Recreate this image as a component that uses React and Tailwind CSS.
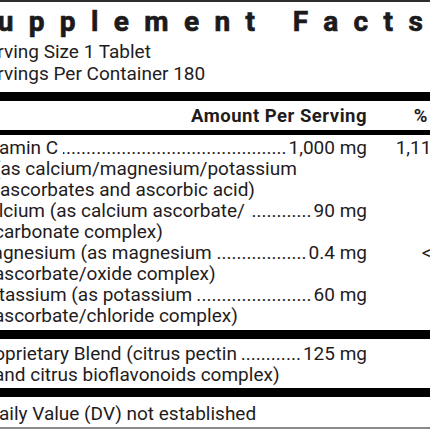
import React from "react";

const DOTS = ".".repeat(120);

function Row({ first, amount, dv, rest = [] }) {
  return (
    <div>
      <div className="flex">
        <div className="flex w-[391px] min-w-0">
          <span className="whitespace-nowrap">{first}&nbsp;</span>
          <span className="flex min-w-0 flex-1 justify-end overflow-hidden whitespace-nowrap">
            <span>{DOTS}</span>
          </span>
          <span className="whitespace-nowrap pl-[2px]">{amount}</span>
        </div>
        <div className="flex-1 whitespace-nowrap pr-[6px] text-right">{dv}</div>
      </div>
      {rest.map((r, i) => (
        <div key={i} className={`whitespace-nowrap ${r.hang ? "pl-[24px]" : "pl-[18px]"}`}>
          {r.t}
        </div>
      ))}
    </div>
  );
}

export default function App() {
  return (
    <div className="h-[430px] w-[430px] overflow-hidden bg-white font-[Roboto,'Liberation_Sans',sans-serif] text-[#1f1c1d]">
      <div className="h-[2px] w-full bg-[#2e2e2e]" />
      <div className="ml-[-24px] w-[486px]">
        <div className="ml-[-11px] whitespace-nowrap pt-[6px] text-[28px] font-bold leading-[28px] tracking-[15.4px] text-[#1c1a1b] [-webkit-text-stroke:0.7px_#1c1a1b]">
          Supplement Facts
        </div>
        <div className="mt-[5px] text-[19px] leading-[22px]">
          <div className="whitespace-nowrap">Serving Size 1 Tablet</div>
          <div className="whitespace-nowrap">Servings Per Container 180</div>
        </div>
        <div className="mt-[7px] h-[9px] bg-black" />
        <div className="flex pt-[5px] text-[18.5px] font-bold leading-[21px]">
          <div className="w-[391px] whitespace-nowrap text-right tracking-[0.5px]">Amount Per Serving</div>
          <div className="flex-1 whitespace-nowrap pr-[6px] text-right">% DV</div>
        </div>
        <div className="mt-[3px] h-[5px] bg-black" />
        <div className="pt-[2px] text-[19px] leading-[21px]">
          <Row
            first="Vitamin C"
            amount="1,000 mg"
            dv="1,111%"
            rest={[
              { t: "(as calcium/magnesium/potassium" },
              { t: "ascorbates and ascorbic acid)", hang: true },
            ]}
          />
          <Row
            first="Calcium (as calcium ascorbate/"
            amount="90 mg"
            dv="7%"
            rest={[{ t: "carbonate complex)" }]}
          />
          <Row
            first="Magnesium (as magnesium"
            amount="0.4 mg"
            dv="<1%"
            rest={[{ t: "ascorbate/oxide complex)" }]}
          />
          <Row
            first="Potassium (as potassium"
            amount="60 mg"
            dv="1%"
            rest={[{ t: "ascorbate/chloride complex)" }]}
          />
        </div>
        <div className="mt-[4px] h-[9px] bg-black" />
        <div className="pt-[4px] text-[19px] leading-[21px]">
          <Row
            first="Proprietary Blend (citrus pectin"
            amount="125 mg"
            dv="†"
            rest={[{ t: "and citrus bioflavonoids complex)" }]}
          />
        </div>
        <div className="mt-[3px] h-[9px] bg-black" />
        <div className="whitespace-nowrap pt-[6px] text-[19px] leading-[21px]">
          †Daily Value (DV) not established
        </div>
        <div className="mt-[3px] h-[2px] bg-[#8a8a8a]" />
      </div>
    </div>
  );
}
